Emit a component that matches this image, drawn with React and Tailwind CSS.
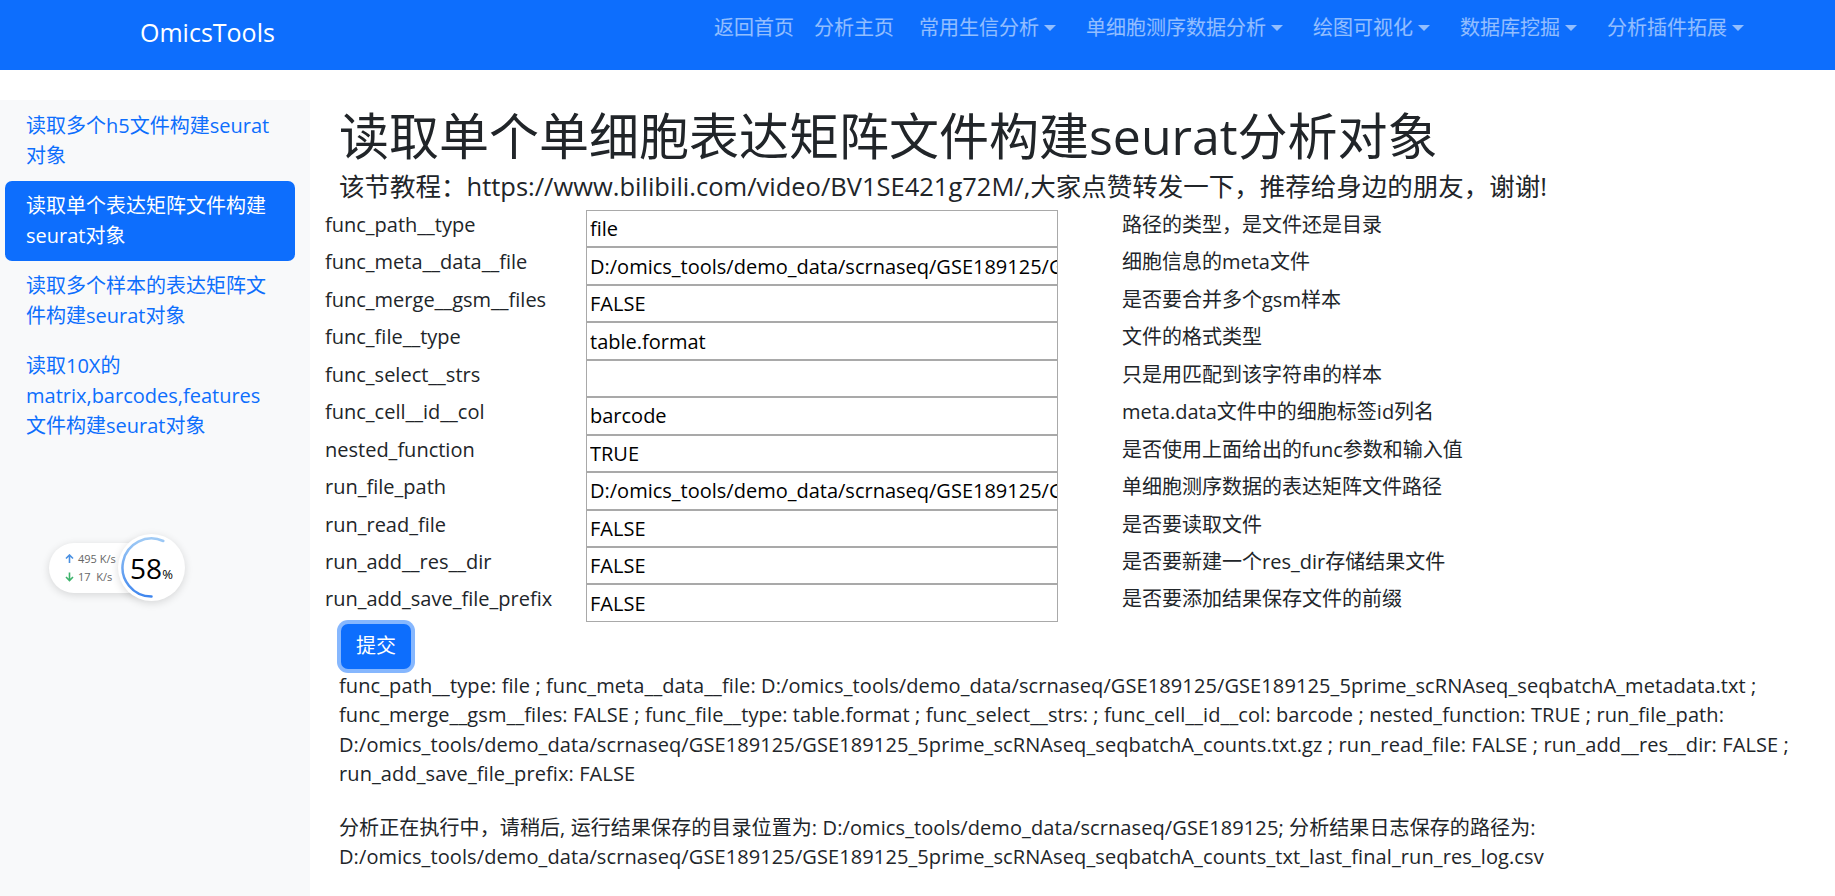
import React from 'react'

const navLinks = ['返回首页', '分析主页']
const navDropdowns = ['常用生信分析', '单细胞测序数据分析', '绘图可视化', '数据库挖掘', '分析插件拓展']

const sideItems = [
  { lines: ['读取多个h5文件构建seurat', '对象'] },
  { lines: ['读取单个表达矩阵文件构建', 'seurat对象'], active: true },
  { lines: ['读取多个样本的表达矩阵文', '件构建seurat对象'] },
  { lines: ['读取10X的', 'matrix,barcodes,features', '文件构建seurat对象'] },
]

const params = [
  { name: 'func_path__type', value: 'file', desc: '路径的类型，是文件还是目录' },
  { name: 'func_meta__data__file', value: 'D:/omics_tools/demo_data/scrnaseq/GSE189125/GSE189125_5prime_scRNAseq_seqbatchA_metadata.txt', desc: '细胞信息的meta文件' },
  { name: 'func_merge__gsm__files', value: 'FALSE', desc: '是否要合并多个gsm样本' },
  { name: 'func_file__type', value: 'table.format', desc: '文件的格式类型' },
  { name: 'func_select__strs', value: '', desc: '只是用匹配到该字符串的样本' },
  { name: 'func_cell__id__col', value: 'barcode', desc: 'meta.data文件中的细胞标签id列名' },
  { name: 'nested_function', value: 'TRUE', desc: '是否使用上面给出的func参数和输入值' },
  { name: 'run_file_path', value: 'D:/omics_tools/demo_data/scrnaseq/GSE189125/GSE189125_5prime_scRNAseq_seqbatchA_counts.txt.gz', desc: '单细胞测序数据的表达矩阵文件路径' },
  { name: 'run_read_file', value: 'FALSE', desc: '是否要读取文件' },
  { name: 'run_add__res__dir', value: 'FALSE', desc: '是否要新建一个res_dir存储结果文件' },
  { name: 'run_add_save_file_prefix', value: 'FALSE', desc: '是否要添加结果保存文件的前缀' },
]

const resultLines = [
  'func_path__type: file ; func_meta__data__file: D:/omics_tools/demo_data/scrnaseq/GSE189125/GSE189125_5prime_scRNAseq_seqbatchA_metadata.txt ;',
  'func_merge__gsm__files: FALSE ; func_file__type: table.format ; func_select__strs: ; func_cell__id__col: barcode ; nested_function: TRUE ; run_file_path:',
  'D:/omics_tools/demo_data/scrnaseq/GSE189125/GSE189125_5prime_scRNAseq_seqbatchA_counts.txt.gz ; run_read_file: FALSE ; run_add__res__dir: FALSE ;',
  'run_add_save_file_prefix: FALSE',
]

const statusLines = [
  '分析正在执行中，请稍后, 运行结果保存的目录位置为: D:/omics_tools/demo_data/scrnaseq/GSE189125; 分析结果日志保存的路径为:',
  'D:/omics_tools/demo_data/scrnaseq/GSE189125/GSE189125_5prime_scRNAseq_seqbatchA_counts_txt_last_final_run_res_log.csv',
]

const Caret = () => (
  <span className="inline-block ml-[5px] align-[0.2em] border-t-[6px] border-x-[6px] border-t-current border-x-transparent" />
)

const SpeedWidget = () => (
  <div className="absolute left-[49px] top-[534px] flex items-center">
    <div className="h-[50px] w-[100px] rounded-l-full bg-white shadow-[0_2px_8px_rgba(0,0,0,0.14)] pl-[16px] flex flex-col justify-center text-[11px] leading-[18px] text-[#666]">
      <div className="flex items-center gap-[4px]">
        <svg width="9" height="10" viewBox="0 0 9 10"><path d="M4.5 1 L4.5 9 M1 4.5 L4.5 1 L8 4.5" stroke="#4a90e2" strokeWidth="1.6" fill="none" /></svg>
        <span>495 K/s</span>
      </div>
      <div className="flex items-center gap-[4px]">
        <svg width="9" height="10" viewBox="0 0 9 10"><path d="M4.5 0.5 L4.5 8.5 M1 5 L4.5 8.5 L8 5" stroke="#3db36b" strokeWidth="1.6" fill="none" /></svg>
        <span className="whitespace-pre">17  K/s</span>
      </div>
    </div>
    <div className="-ml-[31px] relative w-[67px] h-[67px] rounded-full bg-white shadow-[0_2px_8px_rgba(0,0,0,0.14)] flex items-center justify-center">
      <svg className="absolute inset-0" width="67" height="67" viewBox="0 0 67 67">
        <defs>
          <linearGradient id="arc" x1="0" y1="0" x2="0" y2="1">
            <stop offset="0" stopColor="#9fcaf5" />
            <stop offset="1" stopColor="#3f86ee" />
          </linearGradient>
        </defs>
        <path d="M33.5 62.5 A29 29 0 1 1 45.3 7" stroke="url(#arc)" strokeWidth="2.5" fill="none" strokeLinecap="round" />
      </svg>
      <span className="relative text-[28px] leading-none text-black">58<span className="text-[13px]">%</span></span>
    </div>
  </div>
)

export default function App() {
  return (
    <div className="relative min-h-screen bg-white text-[#212529] font-['Open_Sans','Noto_Sans_CJK_SC',sans-serif]">
      <nav className="h-[70px] bg-[#0d6efd] flex items-start">
        <a className="ml-[140px] mt-[14px] text-[25px] leading-[37px] text-white">OmicsTools</a>
        <ul className="ml-auto mr-[76px] mt-[13px] flex text-[20px] leading-[30px] text-white/55">
          {navLinks.map((l) => (
            <li key={l} className="px-[10px]">{l}</li>
          ))}
          {navDropdowns.map((l) => (
            <li key={l} className="px-[15px] whitespace-nowrap">{l}<Caret /></li>
          ))}
        </ul>
      </nav>

      <div className="flex pt-[30px]">
        <aside className="w-[310px] shrink-0 min-h-[796px] bg-[#f8f9fa] pl-[5px] pr-[15px] pt-[1px]">
          {sideItems.map((item, i) => (
            <div
              key={i}
              className={
                item.active
                  ? 'rounded-[7px] bg-[#0d6efd] px-[21px] py-[10px] text-[20px] leading-[30px] text-white'
                  : 'rounded-[7px] px-[21px] py-[10px] text-[20px] leading-[30px] text-[#0d6efd]'
              }
            >
              {item.lines.map((t) => (
                <div key={t} className="whitespace-nowrap">{t}</div>
              ))}
            </div>
          ))}
        </aside>

        <main className="flex-1">
          <h1 className="pl-[29px] mt-[6px] text-[50px] leading-[60px] font-normal whitespace-nowrap">读取单个单细胞表达矩阵文件构建seurat分析对象</h1>
          <h5 className="pl-[29px] mt-[5px] text-[25.5px] leading-[31px] whitespace-nowrap">该节教程：https://www.bilibili.com/video/BV1SE421g72M/,大家点赞转发一下，推荐给身边的朋友，谢谢!</h5>

          {/* form */}
          <div className="ml-[15px] mt-[8px]">
            {params.map((p) => (
              <div key={p.name} className="flex items-start h-[37.45px] text-[20px] leading-[30px]">
                <div className="w-[261px] whitespace-nowrap">{p.name}</div>
                <input
                  readOnly
                  value={p.value}
                  className="w-[472px] h-full border border-[#a9a9a9] pl-[3px] text-black outline-none"
                />
                <div className="ml-[64px] whitespace-nowrap">{p.desc}</div>
              </div>
            ))}
          </div>

          <button className="ml-[31px] mt-[2px] w-[70px] h-[45px] rounded-[7px] bg-[#0d6efd] text-white text-[20px] leading-[30px] ring-4 ring-[#86b7fe]">
            提交
          </button>

          <p className="pl-[29px] mt-[2px] mb-[24px] text-[20px] leading-[29.5px] tracking-[0.1px]">
            {resultLines.map((l) => (
              <span key={l} className="block whitespace-nowrap">{l}</span>
            ))}
          </p>
          <p className="pl-[29px] text-[20px] leading-[29.5px] tracking-[0.1px]">
            {statusLines.map((l) => (
              <span key={l} className="block whitespace-nowrap">{l}</span>
            ))}
          </p>
        </main>
      </div>

      <SpeedWidget />
    </div>
  )
}
